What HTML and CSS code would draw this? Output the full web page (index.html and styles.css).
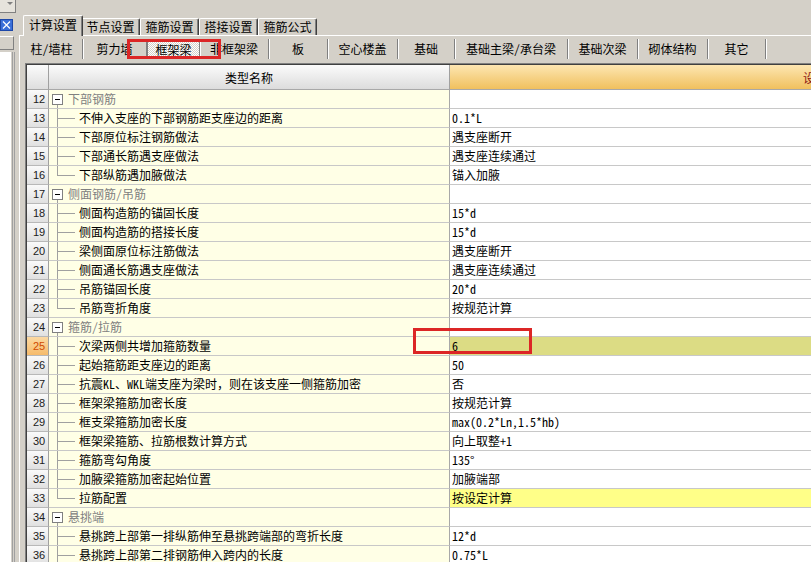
FILE: index.html
```html
<!DOCTYPE html>
<html lang="zh-CN">
<head>
<meta charset="utf-8">
<title>计算设置</title>
<link rel="stylesheet" href="styles.css">
</head>
<body>
<div class="app">
  <aside class="side">
    <div class="combo"><span class="arrow"></span></div>
    <div class="closebtn"><svg width="11" height="10" viewBox="0 0 11 10"><path d="M2 1.5L9 8.5M9 1.5L2 8.5" stroke="#fff" stroke-width="1.2" fill="none"/></svg></div>
    <div class="sidebtn"></div>
    <div class="sidelist"></div>
  </aside>
  <main class="main">
    <div class="tabs">
      <div class="tab on">计算设置</div>
      <div class="tab">节点设置</div>
      <div class="tab">箍筋设置</div>
      <div class="tab">搭接设置</div>
      <div class="tab">箍筋公式</div>
    </div>
    <div class="panel">
      <div class="typebar">
        <div class="ti">柱/墙柱</div>
        <div class="ti">剪力墙</div>
        <div class="ti sel">框架梁</div>
        <div class="ti">非框架梁</div>
        <div class="ti">板</div>
        <div class="ti">空心楼盖</div>
        <div class="ti">基础</div>
        <div class="ti">基础主梁/承台梁</div>
        <div class="ti">基础次梁</div>
        <div class="ti">砌体结构</div>
        <div class="ti">其它</div>
      </div>
      <div class="grid">
        <div class="gridin">
          <div class="hrow">
            <div class="hnum"></div>
            <div class="hname">类型名称</div>
            <div class="hval">设置值</div>
          </div>
          <div class="row"><div class="num">12</div><div class="name g"><span class="tog"></span><span class="gt">下部钢筋</span></div><div class="val"></div></div>
          <div class="row"><div class="num">13</div><div class="name c">不伸入支座的下部钢筋距支座边的距离</div><div class="val">0.1*L</div></div>
          <div class="row"><div class="num">14</div><div class="name c">下部原位标注钢筋做法</div><div class="val">遇支座断开</div></div>
          <div class="row"><div class="num">15</div><div class="name c">下部通长筋遇支座做法</div><div class="val">遇支座连续通过</div></div>
          <div class="row"><div class="num">16</div><div class="name c last">下部纵筋遇加腋做法</div><div class="val">锚入加腋</div></div>
          <div class="row"><div class="num">17</div><div class="name g"><span class="tog"></span><span class="gt">侧面钢筋/吊筋</span></div><div class="val"></div></div>
          <div class="row"><div class="num">18</div><div class="name c">侧面构造筋的锚固长度</div><div class="val">15*d</div></div>
          <div class="row"><div class="num">19</div><div class="name c">侧面构造筋的搭接长度</div><div class="val">15*d</div></div>
          <div class="row"><div class="num">20</div><div class="name c">梁侧面原位标注筋做法</div><div class="val">遇支座断开</div></div>
          <div class="row"><div class="num">21</div><div class="name c">侧面通长筋遇支座做法</div><div class="val">遇支座连续通过</div></div>
          <div class="row"><div class="num">22</div><div class="name c">吊筋锚固长度</div><div class="val">20*d</div></div>
          <div class="row"><div class="num">23</div><div class="name c last">吊筋弯折角度</div><div class="val">按规范计算</div></div>
          <div class="row"><div class="num">24</div><div class="name g"><span class="tog"></span><span class="gt">箍筋/拉筋</span></div><div class="val"></div></div>
          <div class="row"><div class="num hot">25</div><div class="name c">次梁两侧共增加箍筋数量</div><div class="val olive">6</div></div>
          <div class="row"><div class="num">26</div><div class="name c">起始箍筋距支座边的距离</div><div class="val">50</div></div>
          <div class="row"><div class="num">27</div><div class="name c">抗震KL、WKL端支座为梁时，则在该支座一侧箍筋加密</div><div class="val">否</div></div>
          <div class="row"><div class="num">28</div><div class="name c">框架梁箍筋加密长度</div><div class="val">按规范计算</div></div>
          <div class="row"><div class="num">29</div><div class="name c">框支梁箍筋加密长度</div><div class="val">max(0.2*Ln,1.5*hb)</div></div>
          <div class="row"><div class="num">30</div><div class="name c">框架梁箍筋、拉筋根数计算方式</div><div class="val">向上取整+1</div></div>
          <div class="row"><div class="num">31</div><div class="name c">箍筋弯勾角度</div><div class="val">135°</div></div>
          <div class="row"><div class="num">32</div><div class="name c">加腋梁箍筋加密起始位置</div><div class="val">加腋端部</div></div>
          <div class="row"><div class="num">33</div><div class="name c last">拉筋配置</div><div class="val yel">按设定计算</div></div>
          <div class="row"><div class="num">34</div><div class="name g"><span class="tog"></span><span class="gt">悬挑端</span></div><div class="val"></div></div>
          <div class="row"><div class="num">35</div><div class="name c">悬挑跨上部第一排纵筋伸至悬挑跨端部的弯折长度</div><div class="val">12*d</div></div>
          <div class="row"><div class="num">36</div><div class="name c">悬挑跨上部第二排钢筋伸入跨内的长度</div><div class="val">0.75*L</div></div>
        </div>
      </div>
    </div>
  </main>
  <div class="mark mark1"></div>
  <div class="mark mark2"></div>
</div>
</body>
</html>
```

FILE: styles.css
```css
* { box-sizing: border-box; }
html, body { margin: 0; padding: 0; }
body {
  width: 811px;
  height: 562px;
  overflow: hidden;
  background: #d4d0c8;
  font-family: "Noto Sans Mono CJK SC", "Liberation Mono", "Noto Sans CJK SC", monospace;
  font-size: 12px;
  color: #000;
}
.app { display: flex; height: 562px; position: relative; }

/* left strip */
.side { width: 19px; flex: none; display: flex; flex-direction: column; align-items: flex-start; }
.combo {
  width: 16px; height: 13px;
  border-right: 1px solid #808080; border-bottom: 1px solid #808080;
  background: #e6e3dc;
  display: flex; justify-content: flex-end; padding: 2px 2px 0 0;
}
.arrow { width: 0; height: 0; border-left: 3px solid transparent; border-right: 3px solid transparent; border-top: 3px solid #808080; }
.closebtn {
  margin-top: 6px; width: 13px; height: 12px;
  background: #3a6fd8; border: 1px solid #1d47a8;
  display: flex; align-items: center; justify-content: center;
}
.sidebtn {
  margin-top: 5px; width: 14px; height: 14px;
  border-top: 1px solid #fff; border-right: 1px solid #808080; border-bottom: 1px solid #808080;
}
.sidelist {
  margin-top: 2px; flex: 1; width: 15px;
  background: linear-gradient(#fff, #fff) 0 0 / 11px 100% no-repeat;
  border-right: 3px double #a0a0a0;
}

/* main */
.main { flex: 1; min-width: 0; display: flex; flex-direction: column; overflow: hidden; }
.tabs { height: 35px; flex: none; display: flex; align-items: flex-end; padding-left: 4px; }
.tab {
  height: 17px; width: 59px; flex: none;
  border-top: 1px solid #fff; border-left: 1px solid #fff; border-right: 1px solid #404040;
  box-shadow: inset -1px 0 #808080;
  border-radius: 2px 2px 0 0;
  display: flex; align-items: center; justify-content: center;
  line-height: 1; white-space: nowrap;
}
.tab.on {
  height: 21px; width: 60px; margin-right: -2px; margin-bottom: -1px;
  position: relative; z-index: 1; background: #d4d0c8;
  padding-bottom: 2px;
}
.panel { flex: 1; border-top: 1px solid #fff; border-left: 1px solid #fff; display: flex; flex-direction: column; }

.typebar {
  height: 27px; flex: none; padding-left: 1px;
  display: grid;
  grid-template-columns: 62px 64px 53px 69px 59px 70px 57px 113px 70px 70px 58px;
  align-items: start;
}
.ti {
  margin-top: 3px; height: 20px;
  border-right: 1px solid #808080; box-shadow: 1px 0 #fff;
  display: flex; align-items: center; justify-content: center;
  white-space: nowrap; line-height: 1;
}
.ti.sel {
  background: repeating-conic-gradient(#fff 0 25%, #d4d0c8 0 50%) 0 0 / 2px 2px;
  border-left: 1px solid #808080; border-top: 1px solid #808080;
}

.grid {
  margin-left: 5px; flex: 1;
  border-top: 1px solid #808080; border-left: 1px solid #808080;
}
.gridin { height: 100%; border-top: 1px solid #404040; border-left: 1px solid #404040; width: 1200px; }

.hrow, .row { display: flex; }
.hrow { height: 25px; }
.hnum, .hname, .hval {
  height: 25px; border-bottom: 1px solid #a8a8a8; flex: none;
  display: flex; align-items: center; justify-content: center;
}
.hnum { width: 22px; background: linear-gradient(#fbfbfb, #dedede); border-right: 1px solid #a0a0a0; }
.hname { width: 401px; background: linear-gradient(#fbfbfb, #dcdcdc); border-right: 1px solid #a0a0a0; }
.hval { width: 742px; background: linear-gradient(#fde6b2, #f0c05e); color: #8b1414; }

.row { height: 19px; }
.num, .name, .val { height: 19px; flex: none; line-height: 18px; white-space: nowrap; overflow: hidden; }
.num {
  width: 22px; padding-left: 6px;
  font-family: "Liberation Sans", Arial, sans-serif; font-size: 11px;
  background: linear-gradient(#fafafa, #e0e0e0);
  border-right: 1px solid #a0a0a0; border-bottom: 1px solid #b8b8b8;
  color: #202020;
}
.num.hot { background: linear-gradient(#fcd9a2, #f6bb6c); color: #d04a00; }
.name {
  width: 401px; padding-left: 30px;
  background: #ffffe6;
  border-right: 1px solid #a8a8a8; border-bottom: 1px solid #c8c8c8;
}
.name.c {
  background:
    linear-gradient(#a0a0a0, #a0a0a0) 8px 0 / 1px 100% no-repeat,
    linear-gradient(#a0a0a0, #a0a0a0) 8px 9px / 18px 1px no-repeat,
    #ffffe6;
}
.name.c.last {
  background:
    linear-gradient(#a0a0a0, #a0a0a0) 8px 0 / 1px 10px no-repeat,
    linear-gradient(#a0a0a0, #a0a0a0) 8px 9px / 18px 1px no-repeat,
    #ffffe6;
}
.name.g {
  padding-left: 3px; display: flex; align-items: center;
  background: linear-gradient(#a0a0a0, #a0a0a0) 8px 100% / 1px 4px no-repeat, #ffffe6;
}
.tog {
  width: 11px; height: 11px; flex: none;
  border: 1px solid #808080;
  background: linear-gradient(#000, #000) 2px 4px / 5px 1px no-repeat, #fff;
}
.gt { margin-left: 5px; color: #808080; }
.val {
  width: 742px; padding-left: 2px;
  background: #fff; border-bottom: 1px solid #c8c8c8;
}
.val.olive { background: #dcdc84; }
.val.yel { background: #ffff88; }

/* red annotation boxes */
.mark { position: absolute; border: 3px solid #dc2626; pointer-events: none; }
.mark1 { left: 127px; top: 39px; width: 94px; height: 20px; }
.mark2 { left: 413px; top: 328px; width: 119px; height: 26px; }
```
